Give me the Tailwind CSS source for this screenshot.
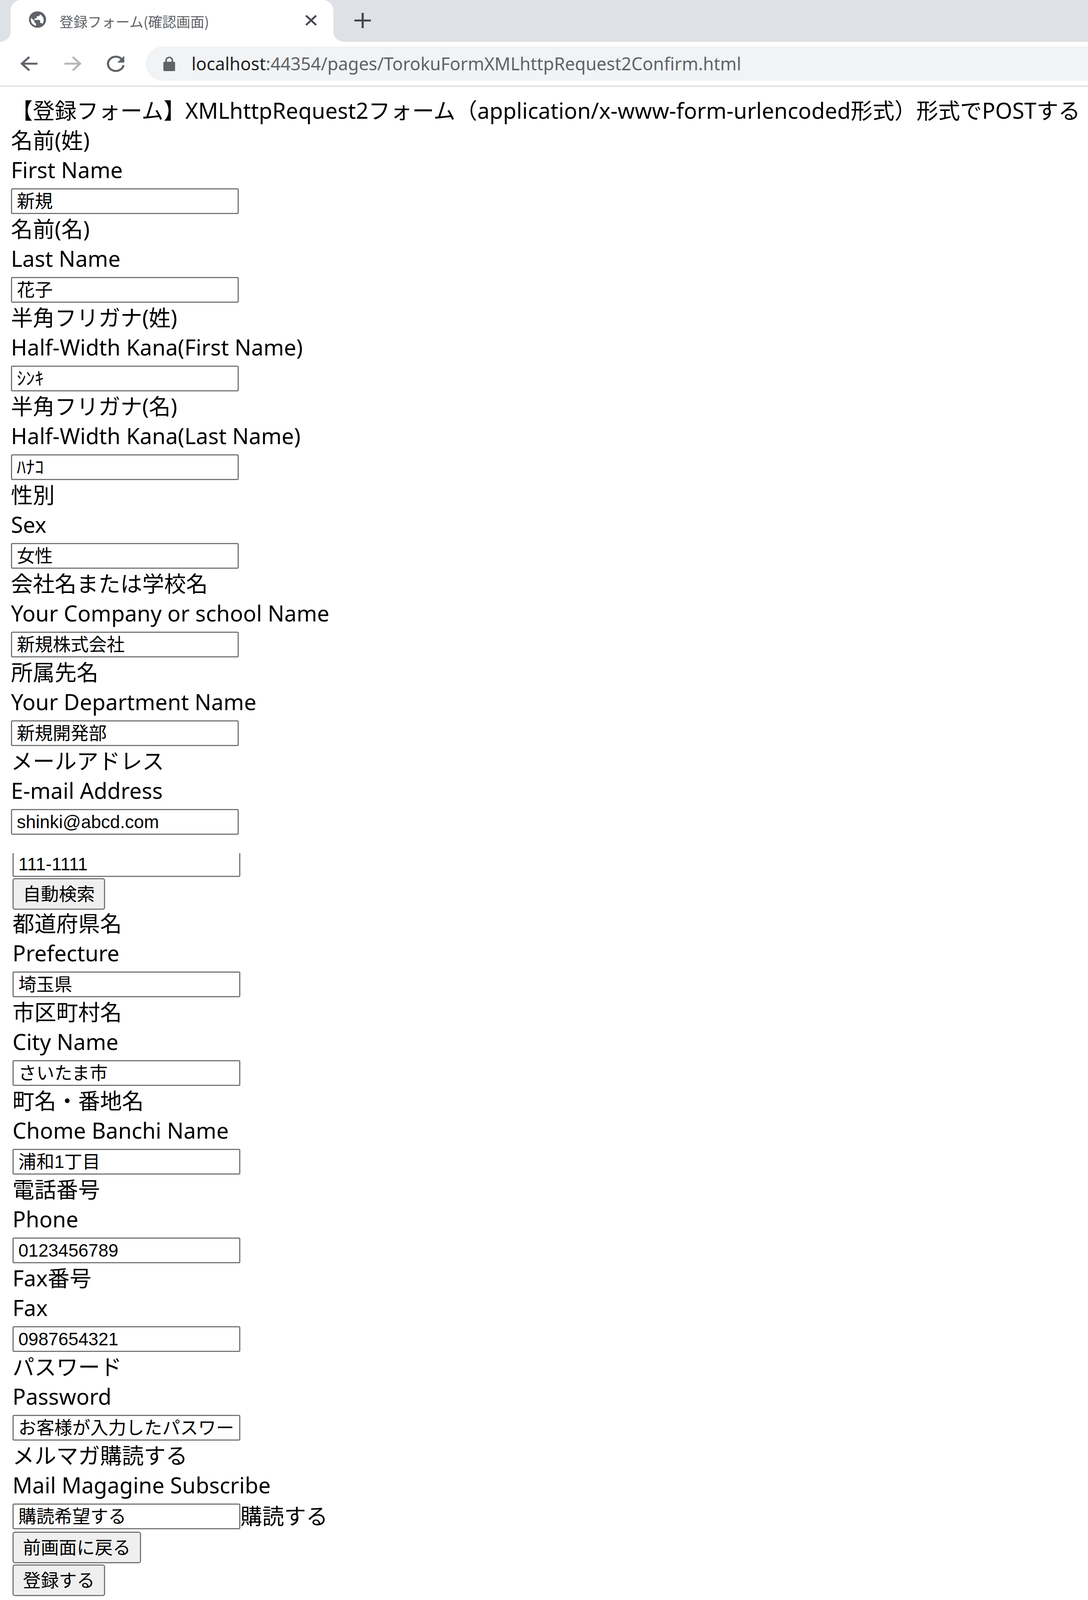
<!DOCTYPE html>
<html lang="ja">
<head>
    <meta charset="UTF-8">
    <title>登録フォーム(確認画面)</title>
    <script src="https://cdn.jsdelivr.net/npm/@tailwindcss/browser@4"></script>
</head>
<body class="bg-white text-black font-['Noto_Sans','Noto_Sans_CJK_JP',sans-serif]">
    <!-- tab strip -->
    <div class="flex items-end h-[107px] bg-[#dee1e6] overflow-hidden">
        <svg class="w-[27px] h-[25px] shrink-0" viewBox="0 0 27 27" preserveAspectRatio="none"><path d="M0 27A27 27 0 0 0 27 0V27Z" fill="#fff"/></svg>
        <div class="flex items-center w-[826px] h-[107px] bg-white rounded-t-[27px] pl-[45px] pr-[41px]">
            <svg class="w-[48px] h-[46px] shrink-0 mb-[8px]" viewBox="0 0 24 24" preserveAspectRatio="none"><path fill="#5f6368" d="M12 1a11 11 0 1 0 0 22 11 11 0 0 0 0-22Zm-8.500 11c0-.800.100-1.500.300-2.200L8 14v1c0 1.100.900 2 2 2v3.400A8.500 8.500 0 0 1 3.500 12Zm14.700 5.800c-.300-.800-1-1.300-1.900-1.300h-1v-3c0-.600-.400-1-1-1H8v-2h2c.600 0 1-.400 1-1v-2h2c1.100 0 2-.900 2-2v-.400a8.500 8.500 0 0 1 3.200 12.700Z"/></svg>
            <span class="ml-[32px] text-[36px] leading-[44px] text-[#5f6368] whitespace-nowrap font-['Noto_Sans_CJK_JP',sans-serif]">登録フォーム(確認画面)</span>
            <svg class="ml-auto w-[32px] h-[30px] shrink-0 mb-[4px]" viewBox="0 0 32 32" preserveAspectRatio="none"><path d="M3 3l26 26M29 3L3 29" stroke="#45494e" stroke-width="5" fill="none"/></svg>
        </div>
        <svg class="w-[27px] h-[25px] shrink-0" viewBox="0 0 27 27" preserveAspectRatio="none"><path d="M0 0A27 27 0 0 0 27 27H0Z" fill="#fff"/></svg>
        <svg class="ml-[27px] mb-[35px] w-[42px] h-[39px] shrink-0" viewBox="0 0 42 42" preserveAspectRatio="none"><path d="M21 0v42M0 21h42" stroke="#45494e" stroke-width="5.500" fill="none"/></svg>
    </div>
    <!-- toolbar -->
    <div class="flex items-center h-[115px] border-b-[3px] border-[#dadce0]">
        <svg class="ml-[52px] w-[46px] h-[40px] shrink-0" viewBox="0 0 46 44" preserveAspectRatio="none"><path d="M44 22H5M23 3 4 22l19 19" stroke="#5f6368" stroke-width="5.500" fill="none"/></svg>
        <svg class="ml-[65px] w-[46px] h-[40px] shrink-0" viewBox="0 0 46 44" preserveAspectRatio="none"><path d="M2 22h39M23 3l19 19-19 19" stroke="#b4b6b9" stroke-width="5.500" fill="none"/></svg>
        <svg class="ml-[63px] w-[48px] h-[42px] shrink-0" viewBox="0 0 48 46" preserveAspectRatio="none"><path d="M40 11a20 20 0 1 0 4 16" stroke="#5f6368" stroke-width="5.500" fill="none"/><path d="M46 1v19H28Z" fill="#5f6368"/></svg>
        <div class="flex items-center flex-1 h-[88px] ml-[53px] bg-[#f1f3f4] rounded-l-[44px] pl-[45px]">
            <svg class="w-[30px] h-[37px] shrink-0" viewBox="0 0 30 40" preserveAspectRatio="none"><path fill="#5f6368" d="M5 14V10a10 10 0 0 1 20 0v4h2a3 3 0 0 1 3 3v20a3 3 0 0 1-3 3H3a3 3 0 0 1-3-3V17a3 3 0 0 1 3-3Zm4 0h12V10a6 6 0 0 0-12 0Z"/></svg>
            <span class="ml-[42px] text-[45px] text-[#5f6368] whitespace-nowrap"><span class="text-[#202124]">localhost</span>:44354/pages/TorokuFormXMLhttpRequest2Confirm.html</span>
        </div>
    </div>

    <h1 class="h-[98px] pt-[22px] pl-[28px] text-[56px] leading-[76px] font-normal whitespace-nowrap">【登録フォーム】XMLhttpRequest2フォーム（application/x-www-form-urlencoded形式）形式でPOSTする</h1>

    <!-- first part of the form -->
    <div class="pl-[28px] text-[56px] leading-[76px]">
        <div class="h-[227px]">
            <div>名前(姓)</div>
            <div>First Name</div>
            <input readonly value="新規" class="block w-[583px] h-[66px] mt-[10px] px-[12px] border-[3px] border-[#767676] rounded-[4px] text-[46px] font-['Liberation_Sans','Noto_Sans_CJK_JP',sans-serif]">
        </div>
        <div class="h-[227px]">
            <div>名前(名)</div>
            <div>Last Name</div>
            <input readonly value="花子" class="block w-[583px] h-[66px] mt-[10px] px-[12px] border-[3px] border-[#767676] rounded-[4px] text-[46px] font-['Liberation_Sans','Noto_Sans_CJK_JP',sans-serif]">
        </div>
        <div class="h-[227px]">
            <div>半角フリガナ(姓)</div>
            <div>Half-Width Kana(First Name)</div>
            <input readonly value="ｼﾝｷ" class="block w-[583px] h-[66px] mt-[10px] px-[12px] border-[3px] border-[#767676] rounded-[4px] text-[46px] font-['Liberation_Sans','Noto_Sans_CJK_JP',sans-serif]">
        </div>
        <div class="h-[227px]">
            <div>半角フリガナ(名)</div>
            <div>Half-Width Kana(Last Name)</div>
            <input readonly value="ﾊﾅｺ" class="block w-[583px] h-[66px] mt-[10px] px-[12px] border-[3px] border-[#767676] rounded-[4px] text-[46px] font-['Liberation_Sans','Noto_Sans_CJK_JP',sans-serif]">
        </div>
        <div class="h-[227px]">
            <div>性別</div>
            <div>Sex</div>
            <input readonly value="女性" class="block w-[583px] h-[66px] mt-[10px] px-[12px] border-[3px] border-[#767676] rounded-[4px] text-[46px] font-['Liberation_Sans','Noto_Sans_CJK_JP',sans-serif]">
        </div>
        <div class="h-[227px]">
            <div>会社名または学校名</div>
            <div>Your Company or school Name</div>
            <input readonly value="新規株式会社" class="block w-[583px] h-[66px] mt-[10px] px-[12px] border-[3px] border-[#767676] rounded-[4px] text-[46px] font-['Liberation_Sans','Noto_Sans_CJK_JP',sans-serif]">
        </div>
        <div class="h-[227px]">
            <div>所属先名</div>
            <div>Your Department Name</div>
            <input readonly value="新規開発部" class="block w-[583px] h-[66px] mt-[10px] px-[12px] border-[3px] border-[#767676] rounded-[4px] text-[46px] font-['Liberation_Sans','Noto_Sans_CJK_JP',sans-serif]">
        </div>
        <div class="h-[227px]">
            <div>メールアドレス</div>
            <div>E-mail Address</div>
            <input readonly value="shinki@abcd.com" class="block w-[583px] h-[66px] mt-[10px] px-[12px] border-[3px] border-[#767676] rounded-[4px] text-[46px] font-['Liberation_Sans','Noto_Sans_CJK_JP',sans-serif]">
        </div>
    </div>

    <!-- second part, the screenshot was stitched here so the zip input is cut off on top -->
    <div class="pl-[32px] text-[56px] leading-[76px]">
        <div class="h-[189px] pt-[48px]">
            <div class="h-[61px] w-[583px] overflow-hidden">
                <input readonly value="111-1111" class="block w-[583px] h-[66px] -mt-[5px] px-[12px] border-[3px] border-[#767676] rounded-[4px] text-[46px] font-['Liberation_Sans','Noto_Sans_CJK_JP',sans-serif]">
            </div>
            <button class="block h-[81px] w-[237px] mt-[3px] bg-[#efefef] border-[3px] border-[#767676] rounded-[6px] text-[46px] leading-[60px] font-['Liberation_Sans','Noto_Sans_CJK_JP',sans-serif]">自動検索</button>
        </div>
        <div class="h-[227px]">
            <div>都道府県名</div>
            <div>Prefecture</div>
            <input readonly value="埼玉県" class="block w-[583px] h-[66px] mt-[10px] px-[12px] border-[3px] border-[#767676] rounded-[4px] text-[46px] font-['Liberation_Sans','Noto_Sans_CJK_JP',sans-serif]">
        </div>
        <div class="h-[227px]">
            <div>市区町村名</div>
            <div>City Name</div>
            <input readonly value="さいたま市" class="block w-[583px] h-[66px] mt-[10px] px-[12px] border-[3px] border-[#767676] rounded-[4px] text-[46px] font-['Liberation_Sans','Noto_Sans_CJK_JP',sans-serif]">
        </div>
        <div class="h-[227px]">
            <div>町名・番地名</div>
            <div>Chome Banchi Name</div>
            <input readonly value="浦和1丁目" class="block w-[583px] h-[66px] mt-[10px] px-[12px] border-[3px] border-[#767676] rounded-[4px] text-[46px] font-['Liberation_Sans','Noto_Sans_CJK_JP',sans-serif]">
        </div>
        <div class="h-[227px]">
            <div>電話番号</div>
            <div>Phone</div>
            <input readonly value="0123456789" class="block w-[583px] h-[66px] mt-[10px] px-[12px] border-[3px] border-[#767676] rounded-[4px] text-[46px] font-['Liberation_Sans','Noto_Sans_CJK_JP',sans-serif]">
        </div>
        <div class="h-[227px]">
            <div>Fax番号</div>
            <div>Fax</div>
            <input readonly value="0987654321" class="block w-[583px] h-[66px] mt-[10px] px-[12px] border-[3px] border-[#767676] rounded-[4px] text-[46px] font-['Liberation_Sans','Noto_Sans_CJK_JP',sans-serif]">
        </div>
        <div class="h-[227px]">
            <div>パスワード</div>
            <div>Password</div>
            <input readonly value="お客様が入力したパスワード" class="block w-[583px] h-[66px] mt-[10px] px-[12px] border-[3px] border-[#767676] rounded-[4px] text-[46px] font-['Liberation_Sans','Noto_Sans_CJK_JP',sans-serif]">
        </div>
        <div>
            <div>メルマガ購読する</div>
            <div>Mail Magagine Subscribe</div>
            <div class="flex items-start mt-[10px]">
                <input readonly value="購読希望する" class="block w-[583px] h-[66px] px-[12px] border-[3px] border-[#767676] rounded-[4px] text-[46px] font-['Liberation_Sans','Noto_Sans_CJK_JP',sans-serif]">
                <span class="leading-[62px]">購読する</span>
            </div>
            <button class="block h-[81px] w-[329px] mt-[6px] bg-[#efefef] border-[3px] border-[#767676] rounded-[6px] text-[46px] leading-[60px] font-['Liberation_Sans','Noto_Sans_CJK_JP',sans-serif]">前画面に戻る</button>
            <button class="block h-[81px] w-[237px] mt-[3px] bg-[#efefef] border-[3px] border-[#767676] rounded-[6px] text-[46px] leading-[60px] font-['Liberation_Sans','Noto_Sans_CJK_JP',sans-serif]">登録する</button>
        </div>
    </div>
</body>
</html>
